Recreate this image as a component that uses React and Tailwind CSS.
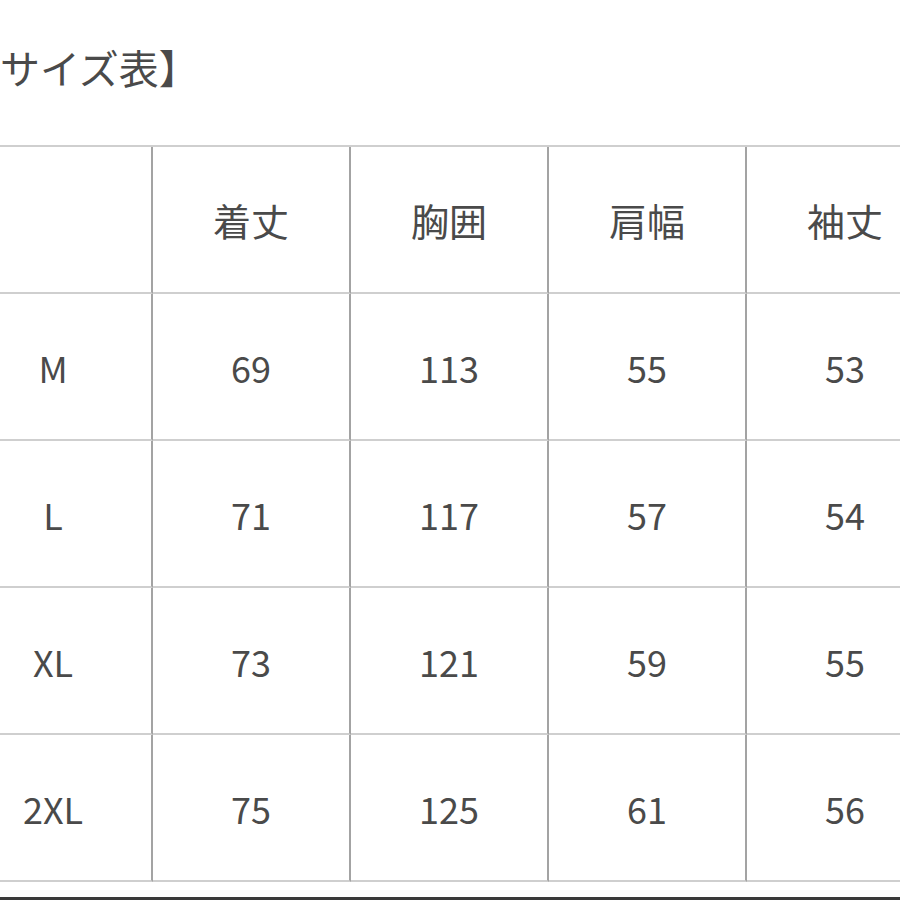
const font = { fontFamily: '"Noto Sans CJK JP", "Noto Sans", sans-serif' };

const headers = ["", "着丈", "胸囲", "肩幅", "袖丈"];

const rows = [
  ["M", "69", "113", "55", "53"],
  ["L", "71", "117", "57", "54"],
  ["XL", "73", "121", "59", "55"],
  ["2XL", "75", "125", "61", "56"],
];

function Cell({ children, head }) {
  return (
    <div
      className={
        "flex h-[147px] items-center justify-center border-r-2 border-b-2 border-r-[#a3a3a3] border-b-[#cfcfcf] font-normal text-[#4a4a4a] " +
        (head ? "text-[38px]" : "text-[36px]")
      }
    >
      {children}
    </div>
  );
}

export default function App() {
  return (
    <div
      className="h-[900px] w-[900px] overflow-hidden bg-white"
      style={font}
    >
      <div className="h-[145px] pt-[39px]">
        <h1 className="ml-[-40px] whitespace-nowrap text-[40px] font-normal leading-[56px] text-[#4a4a4a]">
          【サイズ表】
        </h1>
      </div>

      <div className="ml-[-45px] w-[990px] border-t-2 border-t-[#cfcfcf]">
        <div className="grid grid-cols-[198px_198px_198px_198px_198px]">
          {headers.map((h, i) => (
            <Cell key={`h${i}`} head>
              {h}
            </Cell>
          ))}
          {rows.map((row) =>
            row.map((value, i) => <Cell key={`${row[0]}-${i}`}>{value}</Cell>)
          )}
        </div>
      </div>

      <div className="mt-[15px] h-[3px] bg-[#3a3a3a]" />
    </div>
  );
}
